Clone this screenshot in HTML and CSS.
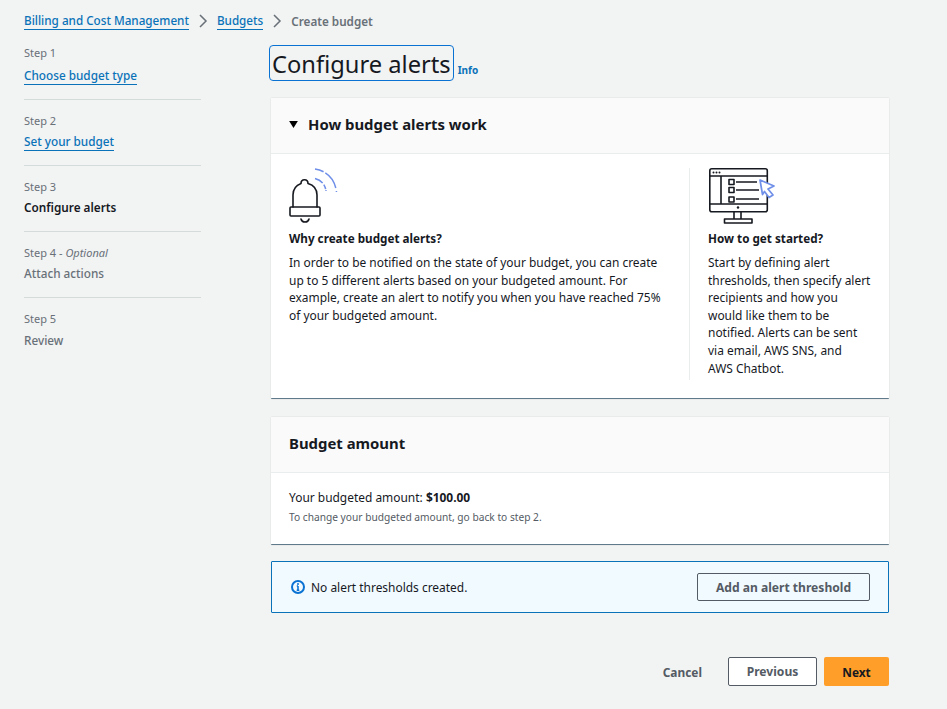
FILE: index.html
```html
<!DOCTYPE html>
<html lang="en">
<head>
<meta charset="utf-8">
<title>Configure alerts</title>
<link rel="stylesheet" href="styles.css">
</head>
<body>
<nav class="crumbs">
  <a href="#">Billing and Cost Management</a>
  <svg class="chev" width="16" height="16" viewBox="0 0 16 16"><path d="M5 2l6 6-6 6"/></svg>
  <a href="#">Budgets</a>
  <svg class="chev" width="16" height="16" viewBox="0 0 16 16"><path d="M5 2l6 6-6 6"/></svg>
  <span>Create budget</span>
</nav>
<div class="layout">
  <aside class="steps">
    <div class="step"><div class="step-no">Step 1</div><a class="step-name" href="#">Choose budget type</a></div>
    <div class="step"><div class="step-no">Step 2</div><a class="step-name" href="#">Set your budget</a></div>
    <div class="step"><div class="step-no">Step 3</div><div class="step-name current">Configure alerts</div></div>
    <div class="step"><div class="step-no">Step 4 - <i>Optional</i></div><div class="step-name muted">Attach actions</div></div>
    <div class="step"><div class="step-no">Step 5</div><div class="step-name muted">Review</div></div>
  </aside>
  <main class="main">
    <div class="title-row">
      <h1>Configure alerts</h1>
      <a class="info" href="#">Info</a>
    </div>
    <section class="card first">
      <header class="card-head">
        <svg class="caret" width="9" height="7" viewBox="0 0 10 8"><path d="M0 0h10L5 8z"/></svg>
        <h2>How budget alerts work</h2>
      </header>
      <div class="how">
        <div class="how-left">
          <svg class="illus" width="52" height="56" viewBox="0 0 52 56" fill="none">
            <g stroke="#16191f" stroke-width="1.6" stroke-linejoin="round" stroke-linecap="round">
              <path d="M4 39V27C4 20 8 17 12 15.500C12 10.500 19 10.500 19 15.500C24 17 28 20 28 27V39"/>
              <rect x="1" y="39" width="30" height="9" rx="1"/>
              <path d="M12 51C13 55 19 55 20 51"/>
            </g>
            <path d="M26 10.500C32 12 36 16 37 23" stroke="#6f8fe8" stroke-width="1.5" stroke-dasharray="9 2 5 1"/>
            <path d="M26 1C38 3 46 11 47.500 24" stroke="#6f8fe8" stroke-width="1.5" stroke-dasharray="9 2 19 3 1.500 2"/>
          </svg>
          <h3>Why create budget alerts?</h3>
          <p>In order to be notified on the state of your budget, you can create up to 5 different alerts based on your budgeted amount. For example, create an alert to notify you when you have reached 75% of your budgeted amount.</p>
        </div>
        <div class="how-right">
          <svg class="illus" width="68" height="56" viewBox="0 0 68 56" fill="none">
            <g stroke="#16191f" stroke-width="1.6" stroke-linejoin="round">
              <rect x="0.800" y="0.800" width="57.500" height="43" rx="2"/>
              <path d="M1 8H58M1 36H58M12 8V36"/>
              <path d="M25 44V51M32 44V51"/>
              <rect x="15.500" y="51" width="27.500" height="4"/>
              <rect x="20" y="11.500" width="5" height="5"/>
              <rect x="20" y="19.500" width="5" height="5"/>
              <rect x="20" y="29" width="5" height="5"/>
              <path d="M27 14H48M27 22H50M27 31H50"/>
            </g>
            <g fill="#16191f"><circle cx="4.500" cy="4.500" r="1"/><circle cx="7.500" cy="4.500" r="1"/><circle cx="10.500" cy="4.500" r="1"/><circle cx="29" cy="39.500" r="1.200"/></g>
            <path d="M51 12L65 18L59 21L64 27L60 29.500L55.500 23.500L53.500 26.500Z" fill="#fff" stroke="#6f8fe8" stroke-width="1.700" stroke-linejoin="round"/>
          </svg>
          <h3>How to get started?</h3>
          <p>Start by defining alert<br>thresholds, then specify alert<br>recipients and how you<br>would like them to be<br>notified. Alerts can be sent<br>via email, AWS SNS, and<br>AWS Chatbot.</p>
        </div>
      </div>
    </section>
    <section class="card">
      <header class="card-head"><h2>Budget amount</h2></header>
      <div class="amount">
        <div class="amount-line">Your budgeted amount: <b>$100.00</b></div>
        <div class="amount-note">To change your budgeted amount, go back to step 2.</div>
      </div>
    </section>
    <div class="notice">
      <svg width="16" height="16" viewBox="0 0 16 16" fill="none"><circle cx="8" cy="8" r="6" stroke="#0972d3" stroke-width="2"/><path d="M8 7v4.200M6.700 11.200h2.600M6.800 7H8" stroke="#0972d3" stroke-width="1.600"/><circle cx="8" cy="4.900" r="1" fill="#0972d3"/></svg>
      <span class="notice-text">No alert thresholds created.</span>
      <button class="btn wide" type="button">Add an alert threshold</button>
    </div>
    <div class="actions">
      <button class="link-btn" type="button">Cancel</button>
      <button class="btn prev" type="button">Previous</button>
      <button class="btn-primary" type="button">Next</button>
    </div>
  </main>
</div>
</body>
</html>
```
FILE: styles.css
```css
* { box-sizing: border-box; }
html, body { height: 100%; }
body {
  margin: 0;
  background: #f2f3f3;
  color: #16191f;
  font-family: "Noto Sans", "Open Sans", sans-serif;
  font-size: 11.950px;
  line-height: 18px;
  overflow: hidden;
}
a { color: #0972b8; text-decoration: none; border-bottom: 1px solid #0972b8; }
.crumbs {
  display: flex;
  align-items: center;
  gap: 6px;
  height: 18px;
  margin: 12px 0 0 24px;
  font-size: 11.700px;
  font-weight: 500;
}
.crumbs a { line-height: 17px; }
.crumbs span { color: #687078; font-weight: 600; }
.chev { fill: none; stroke: #687078; stroke-width: 1.500; }
.layout { display: flex; padding: 0 57px 0 24px; }
.steps { width: 177px; flex: none; margin-top: 14px; margin-right: 69px; }
.step { height: 66px; }
.step + .step { padding-top: 12px; border-top: 1px solid #d5dbdb; }
.step:first-child { height: 55px; padding-top: 0; }
.step:first-child .step-name { margin-top: 5px; }
.step:last-child .step-name { margin-top: 4px; }
.step-no { color: #687078; font-size: 11px; line-height: 18px; }
.step-name { display: inline-block; margin-top: 3px; font-size: 11.750px; font-weight: 500; line-height: 17px; }
.current { font-weight: 600; color: #16191f; }
.muted { color: #687078; }
.main { width: 620px; flex: none; margin-top: 15px; }
.title-row { display: flex; align-items: flex-end; gap: 4px; }
h1 {
  margin: 0 0 0 -1px;
  height: 36px;
  padding: 0 2px;
  border: 1px solid #0972d3;
  border-radius: 4px;
  font-size: 23.700px;
  font-weight: 400;
  line-height: 37px;
}
.info { border: 0; font-size: 10px; font-weight: 700; line-height: 14px; margin-bottom: 4px; }
.card {
  margin: 0 1px;
  background: #fff;
  border-bottom: 1px solid #5f7a8a;
  box-shadow: 0 0 1px 0 rgba(0, 28, 36, .35);
  border-radius: 1px;
}
.first { margin-top: 17px; }
.card + .card { margin-top: 18px; }
.card-head {
  display: flex;
  align-items: center;
  gap: 10px;
  height: 56px;
  padding: 0 18px 3px;
  background: #fafafa;
  border-bottom: 1px solid #eaeded;
}
h2 { margin: 0; font-size: 14.900px; font-weight: 700; }
h3 { margin: 5px 0 0; font-size: 11.700px; font-weight: 700; line-height: 18px; }
p { margin: 7px 0 0; }
.how { display: flex; height: 244px; padding: 14px 18px 18px 18px; }
.how-left { width: 400px; padding-right: 30px; }
.how-left p { width: 380px; line-height: 17.600px; }
.how-right { padding-left: 18px; width: 182px; border-left: 1px solid #eaeded; }
.how-right p { line-height: 17.600px; white-space: nowrap; }
.how-right .illus { margin-left: 1px; }
.illus { display: block; }
.amount { height: 71px; padding: 16px 18px; }
.amount-line { line-height: 18px; }
.amount-line b { font-weight: 700; }
.amount-note { color: #545b64; font-size: 10.200px; line-height: 14px; margin-top: 3px; }
.notice {
  display: flex;
  align-items: center;
  gap: 5px;
  height: 52px;
  margin: 16px 1px 0;
  padding: 0 18px;
  background: #f1faff;
  border: 1px solid #0972b8;
  border-radius: 1px;
}
.notice-text { flex: 1; padding-top: 1px; }
.btn {
  height: 28px;
  background: #fff;
  border: 1px solid #545b64;
  border-radius: 2px;
  color: #545b64;
  font: 700 12.100px/18px "Noto Sans", sans-serif;
}
.wide { width: 173px; padding-top: 2px; background: transparent; }
.actions { display: flex; align-items: center; justify-content: flex-end; margin: 44px 1px 0 0; }
.link-btn { border: 0; background: none; color: #545b64; font: 700 11.900px/18px "Noto Sans", sans-serif; margin-right: 26px; padding: 0; }
.prev { width: 89px; height: 29px; margin-right: 7px; }
.btn-primary {
  width: 65px;
  height: 29px;
  border: 0;
  border-radius: 2px;
  background: #ff9f2a;
  color: #16191f;
  font: 700 11.900px/18px "Noto Sans", sans-serif;
}
```
